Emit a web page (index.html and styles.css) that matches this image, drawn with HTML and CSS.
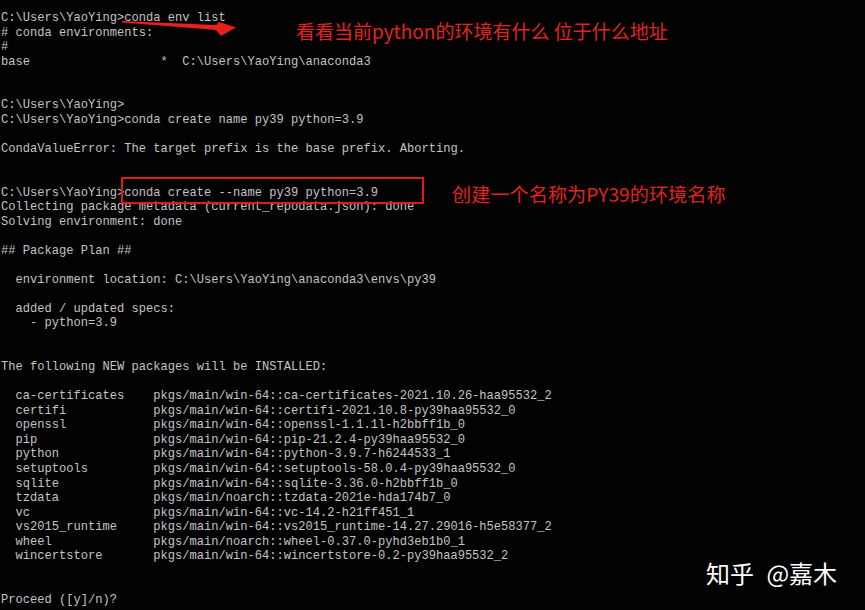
FILE: index.html
```html
<!DOCTYPE html>
<html lang="zh-CN">
<head>
    <meta charset="UTF-8">
    <meta name="viewport" content="width=device-width, initial-scale=1.0">
    <title>conda create</title>
    <link rel="stylesheet" href="styles.css">
</head>
<body>
    <div class="screen">
<pre class="console">C:\Users\YaoYing&gt;conda env list
# conda environments:
#
base                  *  C:\Users\YaoYing\anaconda3


C:\Users\YaoYing&gt;
C:\Users\YaoYing&gt;conda create name py39 python=3.9

CondaValueError: The target prefix is the base prefix. Aborting.


C:\Users\YaoYing&gt;conda create --name py39 python=3.9
Collecting package metadata (current_repodata.json): done
Solving environment: done

## Package Plan ##

  environment location: C:\Users\YaoYing\anaconda3\envs\py39

  added / updated specs:
    - python=3.9


The following NEW packages will be INSTALLED:

  ca-certificates    pkgs/main/win-64::ca-certificates-2021.10.26-haa95532_2
  certifi            pkgs/main/win-64::certifi-2021.10.8-py39haa95532_0
  openssl            pkgs/main/win-64::openssl-1.1.1l-h2bbff1b_0
  pip                pkgs/main/win-64::pip-21.2.4-py39haa95532_0
  python             pkgs/main/win-64::python-3.9.7-h6244533_1
  setuptools         pkgs/main/win-64::setuptools-58.0.4-py39haa95532_0
  sqlite             pkgs/main/win-64::sqlite-3.36.0-h2bbff1b_0
  tzdata             pkgs/main/noarch::tzdata-2021e-hda174b7_0
  vc                 pkgs/main/win-64::vc-14.2-h21ff451_1
  vs2015_runtime     pkgs/main/win-64::vs2015_runtime-14.27.29016-h5e58377_2
  wheel              pkgs/main/noarch::wheel-0.37.0-pyhd3eb1b0_1
  wincertstore       pkgs/main/win-64::wincertstore-0.2-py39haa95532_2


Proceed ([y]/n)?</pre>

        <!-- 标注 -->
        <svg class="arrow" width="120" height="20" viewBox="120 18 120 20">
            <polygon points="122,21 216,25 219,22 236,27.5 221,36 216,30 122,22.5" fill="#e8201c"/>
        </svg>
        <div class="note note-env">看看当前python的环境有什么 位于什么地址</div>
        <div class="highlight"></div>
        <div class="note note-create">创建一个名称为PY39的环境名称</div>
        <div class="watermark">知乎 @嘉木</div>
    </div>
</body>
</html>
```

FILE: styles.css
```css
body {
    margin: 0;
    background-color: #000000;
}
.screen {
    position: relative;
    width: 865px;
    height: 610px;
    overflow: hidden;
    background-color: #020202;
}
.console {
    margin: 0;
    padding: 11px 0 0 1px;
    font-family: "Liberation Mono", "DejaVu Sans Mono", monospace;
    font-size: 12.08px;
    line-height: 14.55px;
    color: #c4c4c4;
}
.arrow {
    position: absolute;
    top: 18px;
    left: 120px;
}
.note {
    position: absolute;
    font-family: "Noto Sans CJK SC", "Noto Sans", sans-serif;
    color: #e3231f;
    white-space: nowrap;
    line-height: 1;
}
.note-env {
    left: 296px;
    top: 21px;
    font-size: 19px;
}
.note-create {
    left: 452px;
    top: 185px;
    font-size: 19.2px;
}
.highlight {
    position: absolute;
    left: 121px;
    top: 177px;
    width: 299px;
    height: 23px;
    border: 2px solid #e01c1a;
}
.watermark {
    position: absolute;
    left: 706px;
    top: 561px;
    font-family: "Noto Sans CJK SC", sans-serif;
    font-size: 24px;
    line-height: 1;
    word-spacing: 7px;
    color: #ffffff;
    white-space: nowrap;
}
```
